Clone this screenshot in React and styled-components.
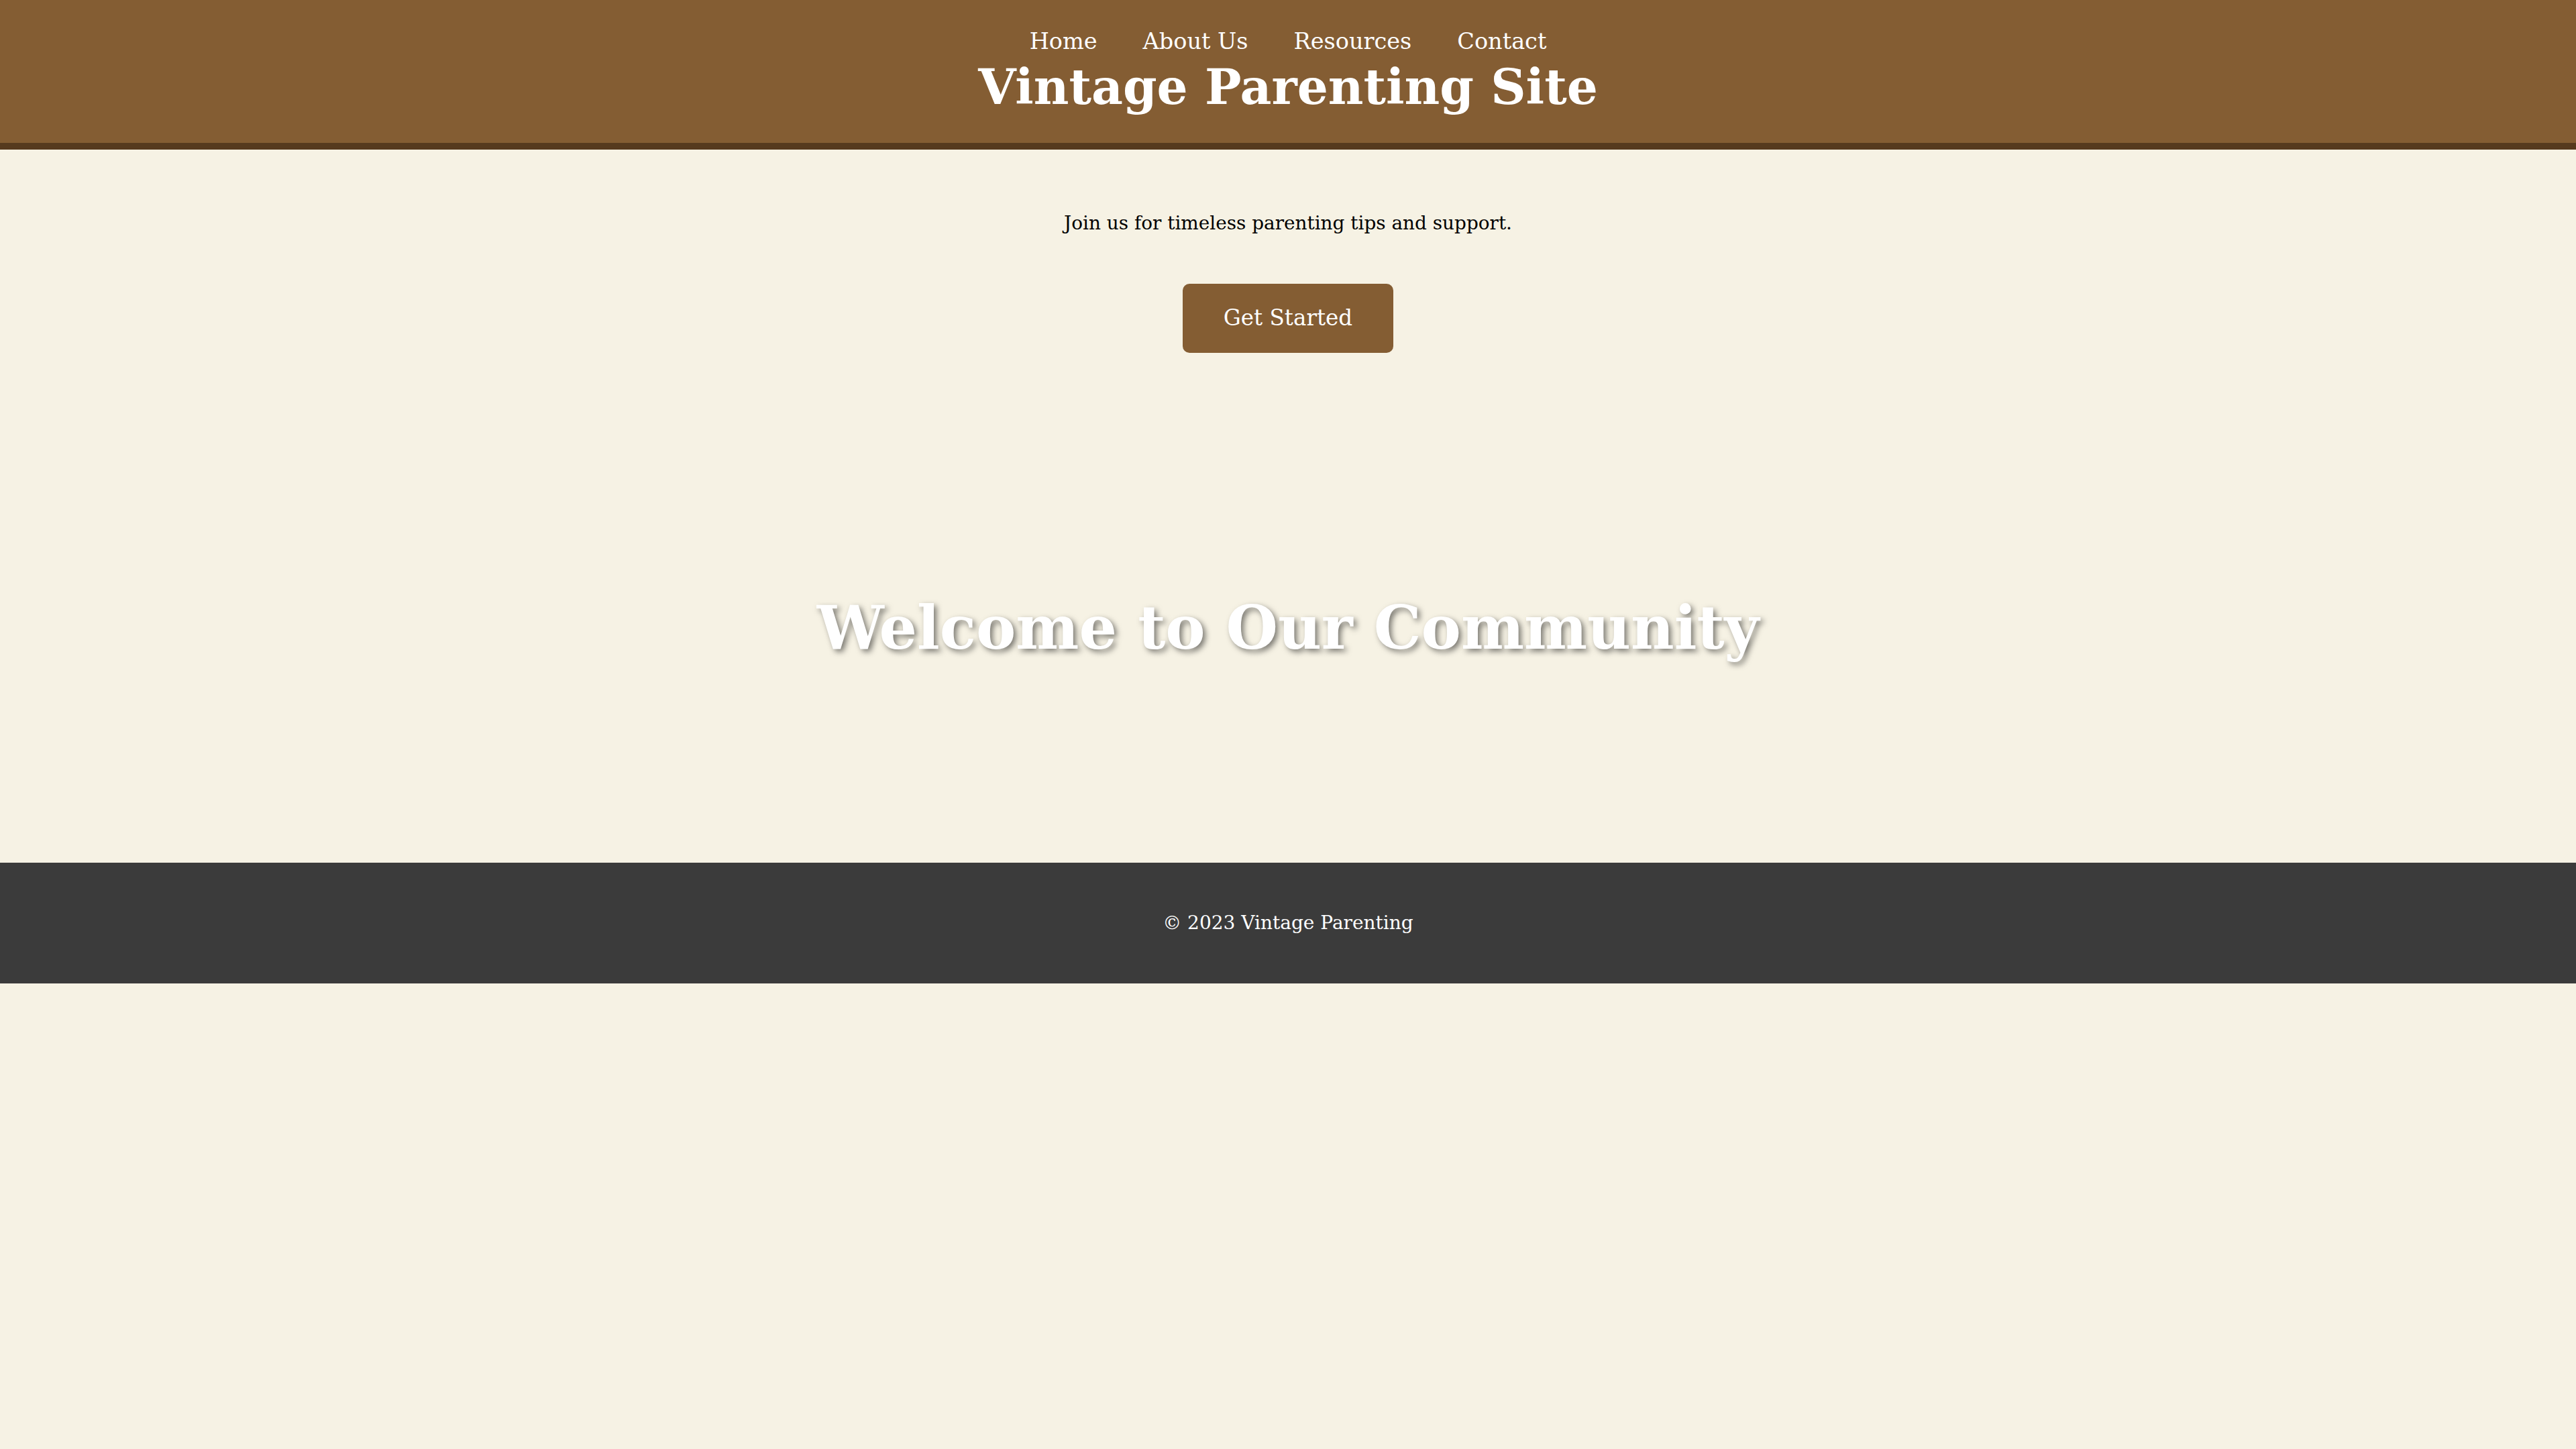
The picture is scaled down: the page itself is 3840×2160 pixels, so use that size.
import React from "react";
import styled, { createGlobalStyle } from "styled-components";

const GlobalStyle = createGlobalStyle`
  body {
    margin: 0;
    background-color: #f6f2e4;
    font-family: "DejaVu Serif", "Liberation Serif", serif;
    font-size: 28px;
    color: #000;
  }
`;

const navLinks = ["Home", "About Us", "Resources", "Contact"];

function App() {
  return (
    <>
      <GlobalStyle />
      <Header>
        <Nav>
          <NavList>
            {navLinks.map((link) => (
              <NavItem key={link}>
                <NavLink href="#">{link}</NavLink>
              </NavItem>
            ))}
          </NavList>
        </Nav>
        <SiteTitle>Vintage Parenting Site</SiteTitle>
      </Header>

      <Intro>
        <IntroText>Join us for timeless parenting tips and support.</IntroText>
        <CtaButton>Get Started</CtaButton>
      </Intro>

      <Hero>
        <HeroTitle>Welcome to Our Community</HeroTitle>
      </Hero>

      <Footer>
        <FooterText>© 2023 Vintage Parenting</FooterText>
      </Footer>
    </>
  );
}

const Header = styled.header`
  background-color: #845d33;
  border-bottom: 10px solid #563a1e;
  padding: 40px 40px 38px;
  text-align: center;
  color: #fff;
`;

const Nav = styled.nav`
  display: flex;
  justify-content: center;
`;

const NavList = styled.ul`
  list-style: none;
  margin: 0;
  padding: 0;
  display: flex;
  gap: 68px;
`;

const NavItem = styled.li`
  font-size: 33.5px;
  line-height: 44px;
`;

const NavLink = styled.a`
  color: #fff;
  text-decoration: none;
`;

const SiteTitle = styled.h1`
  margin: 0;
  font-size: 72.5px;
  line-height: 91px;
  font-weight: bold;
`;

const Intro = styled.section`
  padding: 60px 40px;
  text-align: center;
`;

const IntroText = styled.p`
  margin: 32px 0;
  font-size: 27.9px;
  line-height: 36px;
`;

const CtaButton = styled.button`
  margin-top: 40px;
  background-color: #845d33;
  color: #fff;
  border: none;
  border-radius: 10px;
  padding: 30px 61px;
  font-family: inherit;
  font-size: 32.6px;
  line-height: 43px;
  cursor: pointer;
`;

const Hero = styled.section`
  height: 700px;
  display: flex;
  align-items: center;
  justify-content: center;
`;

const HeroTitle = styled.h2`
  margin: 0;
  font-size: 89px;
  line-height: 114px;
  font-weight: bold;
  color: #fff;
  text-shadow: 4px 4px 8px rgba(0, 0, 0, 0.5);
`;

const Footer = styled.footer`
  background-color: #3b3b3b;
  color: #fff;
  text-align: center;
  padding: 40px;
`;

const FooterText = styled.p`
  margin: 32px 0;
  font-size: 28px;
  line-height: 36px;
`;

export default App;
